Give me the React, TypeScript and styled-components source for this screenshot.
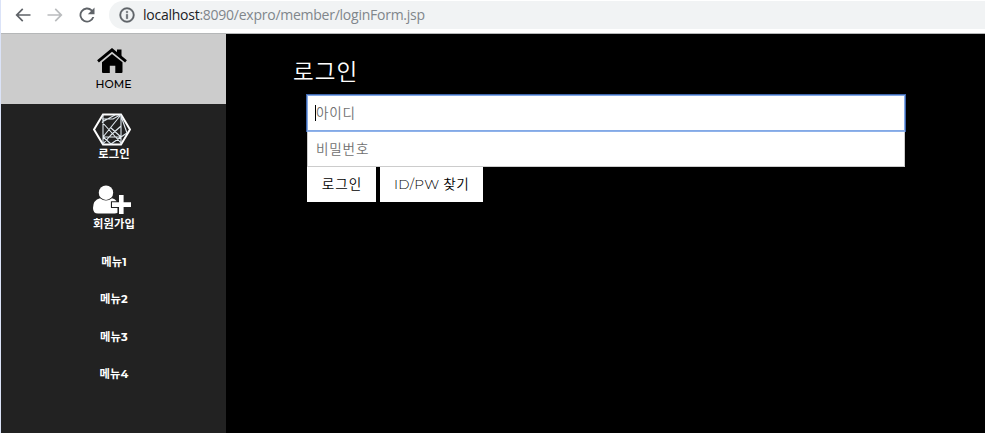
import React from "react";
import styled, { createGlobalStyle } from "styled-components";

const GlobalStyle = createGlobalStyle`
  * { box-sizing: border-box; }
  html, body { margin: 0; padding: 0; overflow: hidden; background: #000; }
`;

const korean = `"Noto Sans CJK KR", sans-serif`;

const Window = styled.div`
  display: flex;
  flex-direction: column;
  width: 985px;
  height: 433px;
  border-left: 1px solid #dbe3f8;
  overflow: hidden;
  background: #000;
`;

const Toolbar = styled.header`
  display: flex;
  flex: none;
  height: 34px;
  padding: 1px 0 4px 12px;
  background: #fff;
  border-bottom: 1px solid #b5b7b8;
`;

const NavIcon = styled.svg<{ $color?: string }>`
  flex: none;
  width: 20px;
  height: 20px;
  margin: 4px 12px 0 0;
  fill: ${(p) => p.$color ?? "#5f6368"};
`;

const AddressBar = styled.div`
  display: flex;
  flex: 1;
  height: 28px;
  padding-left: 9px;
  align-items: center;
  border-radius: 14px 0 0 14px;
  background: #f1f3f4;
`;

const InfoIcon = styled.svg`
  width: 18px;
  height: 18px;
  margin-right: 7px;
  fill: #5f6368;
`;

const Url = styled.span`
  font: 14px/28px "Open Sans", sans-serif;
  letter-spacing: -0.25px;
  white-space: nowrap;
  color: #80868b;
  b { font-weight: 400; color: #202124; }
`;

const Body = styled.div`
  display: flex;
  flex: 1;
`;

const Sidebar = styled.nav`
  display: flex;
  flex-direction: column;
  flex: none;
  width: 225px;
  background: #222;
`;

const MenuItem = styled.a<{ $active?: boolean; $height: number; $top: number; $gap?: number }>`
  display: flex;
  flex-direction: column;
  flex: none;
  align-items: center;
  gap: ${(p) => p.$gap ?? 0}px;
  height: ${(p) => p.$height}px;
  padding-top: ${(p) => p.$top}px;
  background: ${(p) => (p.$active ? "#ccc" : "transparent")};
  color: ${(p) => (p.$active ? "#000" : "#fff")};

  svg { margin-right: 3px; flex: none; }
`;

const MenuLabel = styled.span<{ $latin?: boolean }>`
  font-family: Montserrat, ${korean};
  font-size: ${(p) => (p.$latin ? 11 : 11.3)}px;
  font-weight: ${(p) => (p.$latin ? 500 : 700)};
  line-height: 14px;
  letter-spacing: ${(p) => (p.$latin ? 0 : 0.1)}px;
  padding-left: ${(p) => (p.$latin ? 0 : 1)}px;
  white-space: nowrap;
`;

const Main = styled.main`
  flex: 1;
  padding: 19px 80px 0 67px;
`;

const Title = styled.h1`
  margin: 0;
  height: 42px;
  font: 350 22.5px/34px ${korean};
  letter-spacing: 1.1px;
  color: #fff;
`;

const Form = styled.form`
  display: flex;
  flex-direction: column;
  margin-left: 14px;
`;

const Field = styled.div<{ $focused?: boolean }>`
  display: flex;
  align-items: center;
  height: 36px;
  padding: 0 0 2px 8px;
  background: #fff;
  border: 1px solid ${(p) => (p.$focused ? "#83a9e6" : "#ccc")};
  border-top-width: ${(p) => (p.$focused ? 1 : 0)}px;
  box-shadow: ${(p) => (p.$focused ? "0 1px #8fb2ea, 0 0 0 1px #3f66ac" : "none")};
  position: relative;
  z-index: ${(p) => (p.$focused ? 1 : 0)};
  font: 350 13.6px/20px ${korean};
  letter-spacing: 0.8px;
  color: #707070;
`;

const Caret = styled.span`
  width: 1px;
  height: 16px;
  margin: 1px 0 0 -1px;
  background: #000;
`;

const Buttons = styled.div`
  display: flex;
  gap: 4px;
`;

const Button = styled.button<{ $width: number }>`
  width: ${(p) => p.$width}px;
  height: 35px;
  padding: 0;
  border: 0;
  background: #fff;
  color: #000;
  font: 350 13.6px/35px Montserrat, ${korean};
  letter-spacing: 0.35px;
  white-space: nowrap;

  span { letter-spacing: 1px; padding-left: 1px; }
`;

const HomeIcon = () => (
  <svg width="30" height="26" viewBox="0 0 30 26">
    <path d="M1 13.4 15 1.8 29 13.4" fill="none" stroke="#000" strokeWidth="2.8" />
    <path d="M20 1.500h4.500v9L20 6.500zM5 14.200 15 6l10.500 8.200V24q0 1-1 1h-6.200v-7.300h-5.500V25H6q-1 0-1-1z" />
  </svg>
);

const HexIcon = () => (
  <svg width="38" height="33" viewBox="0 0 38 33" fill="none" stroke="#fff">
    <path d="M10 1.500h18l9 15-9 15H10l-9-15z" strokeWidth="2" />
    <path
      d="M10 1.500v30M28 1.500v30M9 9 28 30M10 24 27 3M9 9l13-7M9 6h11l7-4M10 24h18M10 31l8-9 10-9M28 3l6 17M28 24l-10 7M18 15l10 9M10 24l8 7M34 20l-6 4"
      strokeWidth="1.1"
      stroke="#e1eaf0"
    />
  </svg>
);

const JoinIcon = () => (
  <svg width="38" height="29" viewBox="0 0 38 29" fill="#fff">
    <circle cx="13" cy="7.700" r="7.200" />
    <path d="M7 13.200q6 4.400 12 0 3 .8 4.500 2.800v.5H18v6.500h6.500v4.800q-1 .7-3 .7H5q-5 0-5-5.500 0-8 7-9.800z" />
    <path d="M26 10h4.600v7.200H38v4.700h-7.400V29H26v-7.100h-7v-4.700h7z" />
    <path d="M25.300 15v1.500H18.300v6h7V28" fill="none" stroke="#222" strokeWidth=".5" />
  </svg>
);

export default function App() {
  return (
    <Window>
      <GlobalStyle />
      <Toolbar>
        <NavIcon viewBox="0 0 24 24"><path d="M21 11H6.800l5.600-5.600L11 4l-8 8 8 8 1.400-1.400L6.800 13H21z" /></NavIcon>
        <NavIcon viewBox="0 0 24 24" $color="#babcbe"><path d="M3 11h14.200l-5.600-5.600L13 4l8 8-8 8-1.400-1.400 5.600-5.600H3z" /></NavIcon>
        <NavIcon viewBox="0 0 24 24"><path d="M18.400 5.600A9 9 0 1 0 20.700 14.500h-2.300A6.800 6.800 0 1 1 16.800 7.200L13 11h8V3z" /></NavIcon>
        <AddressBar>
          <InfoIcon viewBox="0 0 24 24"><path d="M11 17h2v-6h-2zm0-8h2V7h-2zm1-7a10 10 0 1 0 0 20 10 10 0 0 0 0-20m0 18a8 8 0 1 1 0-16 8 8 0 0 1 0 16" stroke="#5f6368" strokeWidth=".5" /></InfoIcon>
          <Url><b>localhost</b>:8090/expro/member/loginForm.jsp</Url>
        </AddressBar>
      </Toolbar>
      <Body>
        <Sidebar>
          <MenuItem $active $height={70} $top={14} $gap={3}>
            <HomeIcon />
            <MenuLabel $latin>HOME</MenuLabel>
          </MenuItem>
          <MenuItem $height={70} $top={9} $gap={1}>
            <HexIcon />
            <MenuLabel>로그인</MenuLabel>
          </MenuItem>
          <MenuItem $height={69} $top={11} $gap={3}>
            <JoinIcon />
            <MenuLabel>회원가입</MenuLabel>
          </MenuItem>
          {[1, 2, 3, 4].map((n) => (
            <MenuItem key={n} $height={37.5} $top={11.5}>
              <MenuLabel>메뉴{n}</MenuLabel>
            </MenuItem>
          ))}
        </Sidebar>
        <Main>
          <Title>로그인</Title>
          <Form>
            <Field $focused><Caret />아이디</Field>
            <Field>비밀번호</Field>
            <Buttons>
              <Button type="button" $width={69}><span>로그인</span></Button>
              <Button type="button" $width={103}>ID/PW 찾기</Button>
            </Buttons>
          </Form>
        </Main>
      </Body>
    </Window>
  );
}
